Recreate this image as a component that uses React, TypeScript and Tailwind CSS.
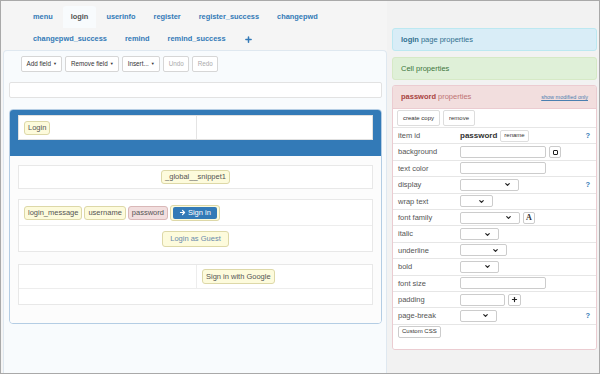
import React from 'react';
import { ChevronDown, ArrowRight, Plus } from 'lucide-react';

const tabsRow1 = ['menu', 'login', 'userinfo', 'register', 'register_success', 'changepwd'];
const tabsRow2 = ['changepwd_success', 'remind', 'remind_success'];

function Tab({ name, active }: { name: string; active?: boolean }) {
  return (
    <div
      className={`h-[22px] px-[8px] mr-[2px] leading-[22px] font-bold text-[7.4px] rounded-t-[3px] ${
        active ? 'bg-[#f8fbfd] text-[#555]' : 'text-[#337ab7]'
      }`}
    >
      {name}
    </div>
  );
}

function ToolButton({ label, caret, disabled }: { label: string; caret?: boolean; disabled?: boolean }) {
  return (
    <div
      className={`h-[16px] px-[4.5px] flex items-center bg-white border border-[#d6d6d6] rounded-[2px] text-[6.3px] ${
        disabled ? 'text-[#aaa]' : 'text-[#333]'
      }`}
    >
      {label}
      {caret && <span className="text-[4px] ml-[2px]">▼</span>}
    </div>
  );
}

function Chip({ children, tone = 'yellow' }: { children: React.ReactNode; tone?: 'yellow' | 'pink' }) {
  const toneCls =
    tone === 'pink'
      ? 'bg-[#f2dede] border-[#d9b8b8] text-[#555]'
      : 'bg-[#fdfbdc] border-[#ddd8a8] text-[#555]';
  return (
    <div className={`h-[14px] px-[3px] flex items-center border rounded-[3px] text-[7.5px] ${toneCls}`}>
      {children}
    </div>
  );
}

function Select({ w }: { w: string }) {
  return (
    <div className={`${w} h-[12px] bg-white border border-[#ccc] rounded-[2px] flex items-center justify-end pr-[7px]`}>
      <ChevronDown size={7} strokeWidth={4} className="text-[#222]" />
    </div>
  );
}

function Input({ w }: { w: string }) {
  return <div className={`${w} h-[12px] bg-white border border-[#ccc] rounded-[2px]`} />;
}

function SmallBtn({ children }: { children: React.ReactNode }) {
  return (
    <div className="h-[12px] min-w-[12px] px-[2px] ml-[3px] bg-white border border-[#ccc] rounded-[2px] flex items-center justify-center text-[6.5px] text-[#333]">
      {children}
    </div>
  );
}

function PropRow({ label, help, children }: { label: string; help?: boolean; children?: React.ReactNode }) {
  return (
    <div className="h-[16.4px] border-t border-[#e6e6e6] flex items-center pl-[5px] pr-[6px]">
      <div className="w-[62px] text-[7.5px] text-[#555]">{label}</div>
      <div className="flex-1 flex items-center">{children}</div>
      {help && <div className="text-[7.5px] font-bold text-[#337ab7]">?</div>}
    </div>
  );
}

export default function App() {
  return (
    <div
      className="w-[600px] h-[374px] border border-[#a9a9a9] bg-[#f3f3f3] flex overflow-hidden"
      style={{ fontFamily: '"Liberation Sans", Arial, sans-serif' }}
    >
      {/* Left: page editor */}
      <div className="w-[386px] flex flex-col bg-[#f5f5f5]">
        <div className="pl-[24px] pt-[5px]">
          <div className="flex">
            {tabsRow1.map((t) => (
              <Tab key={t} name={t} active={t === 'login'} />
            ))}
          </div>
          <div className="flex items-center">
            {tabsRow2.map((t) => (
              <Tab key={t} name={t} />
            ))}
            <div className="h-[22px] px-[8px] flex items-center text-[#337ab7]">
              <Plus size={9} strokeWidth={4} />
            </div>
          </div>
        </div>

        <div className="flex-1 ml-[2px] border border-b-0 border-[#dfe8f0] rounded-tl-[4px] rounded-tr-[4px] bg-[#f8fbfd] pl-[5px] pr-[4px] pt-[5px]">
          <div className="flex gap-[3px] ml-[12px]">
            <ToolButton label="Add field" caret />
            <ToolButton label="Remove field" caret />
            <ToolButton label="Insert..." caret />
            <ToolButton label="Undo" disabled />
            <ToolButton label="Redo" disabled />
          </div>

          <div className="mt-[10px] h-[16px] bg-white border border-[#e2e2e2] rounded-[2px]" />

          <div className="mt-[11px] border border-[#b4cde4] rounded-[4px] overflow-hidden">
            <div className="bg-[#337ab7] px-[8px] pt-[5px] pb-[16px]">
              <div className="h-[25px] bg-white border border-[#e0e0e0] flex">
                <div className="w-[178px] border-r border-[#e4e4e4] flex items-center pl-[5px]">
                  <Chip>Login</Chip>
                </div>
                <div className="flex-1" />
              </div>
            </div>

            <div className="bg-[#fcfcfc] px-[8px] pt-[9px] pb-[18px]">
              <div className="h-[24px] bg-white border border-[#e8e8e8] flex items-center justify-center">
                <Chip>_global__snippet1</Chip>
              </div>

              <div className="mt-[10px] bg-white border border-[#e8e8e8]">
                <div className="h-[26px] flex items-center gap-[2px] pl-[5px] border-b border-[#ededed]">
                  <Chip>login_message</Chip>
                  <Chip>username</Chip>
                  <Chip tone="pink">password</Chip>
                  <div className="h-[16px] px-[2px] flex items-center bg-[#fdfbdc] border border-[#ddd8a8] rounded-[3px]">
                    <div className="h-[12px] px-[6px] flex items-center gap-[2px] bg-[#337ab7] rounded-[2px] text-white text-[7.5px]">
                      <ArrowRight size={7} strokeWidth={4} />
                      Sign in
                    </div>
                  </div>
                </div>
                <div className="h-[25px] flex items-center justify-center">
                  <div className="h-[16px] px-[7px] flex items-center bg-[#fdfbdc] border border-[#ddd8a8] rounded-[3px] text-[7.5px] text-[#6a8aac]">
                    Login as Guest
                  </div>
                </div>
              </div>

              <div className="mt-[12px] bg-white border border-[#e8e8e8]">
                <div className="h-[24px] flex border-b border-[#ededed]">
                  <div className="w-[178px] border-r border-[#ededed]" />
                  <div className="flex-1 flex items-center pl-[5px]">
                    <div className="h-[15px] px-[3px] flex items-center bg-[#fdfbdc] border border-[#ddd8a8] rounded-[3px] text-[7.5px] text-[#555]">
                      Sign in with Google
                    </div>
                  </div>
                </div>
                <div className="h-[15px]" />
              </div>
            </div>
          </div>
        </div>
      </div>

      {/* Right: properties */}
      <div className="flex-1 bg-[#f2f2f2] pl-[5px] pr-[2px] pt-[27px]">
        <div className="h-[23px] bg-[#d9edf7] border border-[#bce8f1] rounded-[3px] flex items-center pl-[8px] text-[7.5px] text-[#31708f]">
          <span className="font-bold">login</span>
          <span className="ml-[2px]">page properties</span>
        </div>
        <div className="mt-[6px] h-[23px] bg-[#dff0d8] border border-[#d6e9c6] rounded-[3px] flex items-center pl-[8px] text-[7.5px] text-[#3c763d]">
          Cell properties
        </div>

        <div className="mt-[5px] border border-[#ebccd1] rounded-[3px] overflow-hidden">
          <div className="h-[23px] bg-[#f2dede] border-b border-[#ebccd1] flex items-center pl-[8px] pr-[8px] text-[#a94442]">
            <span className="font-bold text-[7.5px]">password</span>
            <span className="ml-[2px] text-[7.5px] text-[#c07373]">properties</span>
            <span className="ml-auto text-[5.5px] underline text-[#4a7fb0]">show modified only</span>
          </div>
          <div className="bg-white pb-[11px]">
            <div className="flex gap-[3px] pl-[4px] pt-[1px] pb-[1px]">
              <div className="h-[16px] px-[5px] flex items-center border border-[#ddd] rounded-[2px] text-[6px] text-[#333]">create copy</div>
              <div className="h-[16px] px-[5px] flex items-center border border-[#ddd] rounded-[2px] text-[6px] text-[#333]">remove</div>
            </div>
            <PropRow label="item id" help>
              <span className="text-[8px] font-bold text-[#333]">password</span>
              <div className="ml-[3px] h-[12px] px-[3px] flex items-center border border-[#ddd] rounded-[2px] text-[6px] text-[#333]">rename</div>
            </PropRow>
            <PropRow label="background">
              <Input w="w-[86px]" />
              <SmallBtn>
                <div className="w-[5px] h-[5px] border-[1.5px] border-[#222] rounded-[1px]" />
              </SmallBtn>
            </PropRow>
            <PropRow label="text color">
              <Input w="w-[86px]" />
            </PropRow>
            <PropRow label="display" help>
              <Select w="w-[59px]" />
            </PropRow>
            <PropRow label="wrap text">
              <Select w="w-[33px]" />
            </PropRow>
            <PropRow label="font family">
              <Select w="w-[60px]" />
              <SmallBtn>
                <span className="text-[8px] font-bold" style={{ fontFamily: '"Liberation Serif", serif' }}>A</span>
              </SmallBtn>
            </PropRow>
            <PropRow label="italic">
              <Select w="w-[39px]" />
            </PropRow>
            <PropRow label="underline">
              <Select w="w-[47px]" />
            </PropRow>
            <PropRow label="bold">
              <Select w="w-[39px]" />
            </PropRow>
            <PropRow label="font size">
              <Input w="w-[86px]" />
            </PropRow>
            <PropRow label="padding">
              <Input w="w-[45px]" />
              <SmallBtn>
                <Plus size={7} strokeWidth={4} className="text-[#222]" />
              </SmallBtn>
            </PropRow>
            <PropRow label="page-break" help>
              <Select w="w-[37px]" />
            </PropRow>
            <div className="flex border-t border-[#e6e6e6] pl-[5px] pt-[1px]">
              <div className="h-[12px] px-[3px] flex items-center border border-[#ccc] rounded-[2px] text-[6px] text-[#333]">
                Custom CSS
              </div>
            </div>
          </div>
        </div>
      </div>
    </div>
  );
}
